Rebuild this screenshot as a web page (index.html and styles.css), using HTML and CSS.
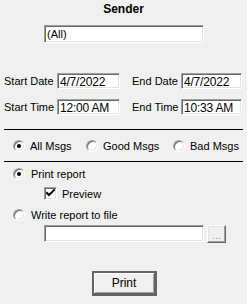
FILE: index.html
```html
<!DOCTYPE html>
<html>
<head>
<meta charset="utf-8">
<link rel="stylesheet" href="styles.css">
</head>
<body>
<div class="panel">
  <div class="title">Sender</div>
  <div class="sender-row"><div class="field sender">(All)</div></div>

  <div class="daterow first">
    <span class="label l1">Start Date</span><div class="field f1">4/7/2022</div>
    <span class="label l2">End Date</span><div class="field f2">4/7/2022</div>
  </div>
  <div class="daterow second">
    <span class="label l1">Start Time</span><div class="field f1">12:00 AM</div>
    <span class="label l2">End Time</span><div class="field f2">10:33 AM</div>
  </div>

  <div class="sep sep1"></div>
  <div class="msgrow">
    <div class="opt o1"><span class="radio on"></span><span>All Msgs</span></div>
    <div class="opt o2"><span class="radio"></span><span>Good Msgs</span></div>
    <div class="opt o3"><span class="radio"></span><span>Bad Msgs</span></div>
  </div>
  <div class="sep sep2"></div>

  <div class="opt line print"><span class="radio on"></span><span>Print report</span></div>
  <div class="opt preview"><span class="check"><svg width="9" height="9" viewBox="0 0 9 9"><path d="M1 4 L3 6 L8 1" stroke="#000" stroke-width="2" fill="none" stroke-linecap="square"/></svg></span><span>Preview</span></div>
  <div class="opt line write"><span class="radio"></span><span>Write report to file</span></div>
  <div class="filerow"><div class="field file"></div><div class="btn browse">...</div></div>

  <div class="printrow"><div class="btn default">Print</div></div>
</div>
</body>
</html>
```
FILE: styles.css
```css
html, body { margin: 0; padding: 0; background: #f0f0f0; }
body { font-family: "Liberation Sans", Arial, sans-serif; font-size: 11px; color: #000; white-space: nowrap; }
.panel { width: 247px; height: 304px; display: flex; flex-direction: column; }
.title { font-weight: bold; text-align: center; height: 20px; line-height: 18px; font-size: 12px; }
.sender-row { margin-top: 5px; padding-left: 44px; }
.field {
  box-sizing: border-box; background: #fff; height: 16px;
  border-top: 1px solid #a0a0a0; border-left: 1px solid #a0a0a0;
  border-bottom: 1px solid #fff; border-right: 1px solid #fff;
  box-shadow: inset 1px 1px 0 #696969, inset -1px -1px 0 #e3e3e3;
  padding-left: 2px; line-height: 16px; font-size: 12px; letter-spacing: -0.2px;
}
.sender { width: 160px; height: 18px; line-height: 17px; font-size: 11px; letter-spacing: 0; }
.daterow { display: flex; align-items: center; height: 16px; }
.daterow.first { margin-top: 30px; }
.daterow.second { margin-top: 10px; }
.label { display: block; font-size: 11px; }
.l1 { margin-left: 4px; width: 53px; }
.f1 { width: 63px; }
.l2 { margin-left: 12px; width: 49px; }
.f2 { width: 61px; }
.sep { margin-left: 4px; width: 239px; height: 1px; background: #000; }
.sep1 { margin-top: 14px; }
.msgrow { display: flex; height: 12px; margin-top: 10px; }
.opt { display: flex; align-items: center; height: 12px; font-size: 11px; }
.opt .radio { margin-right: 5px; }
.o1 { margin-left: 13px; width: 73px; }
.o2 { width: 87px; }
.sep2 { margin-top: 9px; }
.radio {
  box-sizing: border-box; width: 12px; height: 12px; border-radius: 50%;
  background: #fff; position: relative; flex: none;
  border: 1px solid; border-color: #a0a0a0 #fff #fff #a0a0a0;
  box-shadow: inset 1px 1px 0 #696969, inset -1px -1px 0 #e3e3e3;
}
.radio.on::after {
  content: ""; position: absolute; left: 3px; top: 3px; width: 4px; height: 4px;
  border-radius: 50%; background: #000;
}
.line { padding-left: 13px; }
.line .radio { margin-right: 6px; }
.print { margin-top: 6px; }
.preview { margin-top: 7px; padding-left: 44px; height: 13px; }
.check {
  box-sizing: border-box; width: 13px; height: 13px; background: #fff; margin-right: 5px;
  border: 1px solid; border-color: #a0a0a0 #fff #fff #a0a0a0;
  box-shadow: inset 1px 1px 0 #696969, inset -1px -1px 0 #e3e3e3;
  display: flex; align-items: center; justify-content: center;
}
.write { margin-top: 9px; }
.filerow { display: flex; margin-top: 4px; padding-left: 44px; }
.file { width: 160px; height: 17px; }
.btn {
  box-sizing: border-box; background: #f0f0f0; text-align: center;
  border: 1px solid; border-color: #fff #696969 #696969 #fff;
  box-shadow: inset -1px -1px 0 #a0a0a0, inset 1px 1px 0 #e3e3e3;
}
.browse { width: 19px; height: 18px; margin-left: 3px; color: #a0a0a0; line-height: 18px; font-size: 11px; }
.printrow { margin-top: 28px; padding-left: 92px; }
.default {
  width: 65px; height: 25px; line-height: 20px; border: 2px solid #646464;
  border-right-width: 3px; border-bottom-width: 3px; font-size: 12px;
  box-shadow: inset 1px 1px 0 #fff, inset -1px -1px 0 #a0a0a0;
}
```
